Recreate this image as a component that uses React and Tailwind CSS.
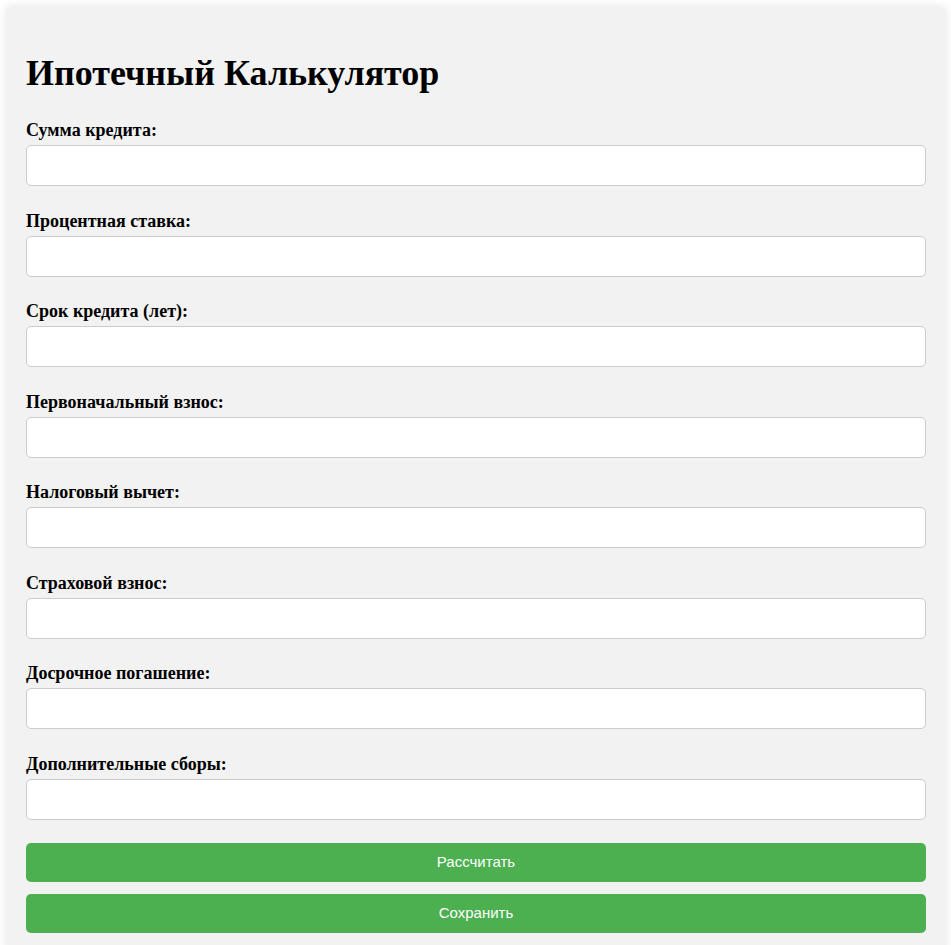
const fields = [
  'Сумма кредита:',
  'Процентная ставка:',
  'Срок кредита (лет):',
  'Первоначальный взнос:',
  'Налоговый вычет:',
  'Страховой взнос:',
  'Досрочное погашение:',
  'Дополнительные сборы:',
];

export default function App() {
  return (
    <div className="min-h-screen bg-white pt-[6px] pl-[6px] pr-[5px] font-['Liberation_Serif',serif] text-black">
      <div className="rounded-lg bg-[#f2f2f2] p-5 shadow-[0_0_10px_rgba(0,0,0,0.1)]">
        <h1 className="mt-[27px] mb-[26px] text-[36px] font-bold leading-[41px]">Ипотечный Калькулятор</h1>
        <div className="flex flex-col">
          {fields.map((label, i) => (
            <div key={label} className={i < fields.length - 1 ? 'mb-[24.57px]' : 'mb-[23px]'}>
              <label className="mb-[4px] block text-[18px] font-bold leading-[21px]">{label}</label>
              <input
                type="text"
                className="block h-[41px] w-full rounded-[5px] border border-[#ccc] bg-white px-[10px] outline-none"
              />
            </div>
          ))}
        </div>
        <div className="flex flex-col gap-3 font-['Liberation_Sans',Arial,sans-serif]">
          <button className="h-[39px] w-full rounded-[5px] bg-[#4caf50] text-[15px] text-white">Рассчитать</button>
          <button className="h-[39px] w-full rounded-[5px] bg-[#4caf50] text-[15px] text-white">Сохранить</button>
        </div>
      </div>
    </div>
  );
}
